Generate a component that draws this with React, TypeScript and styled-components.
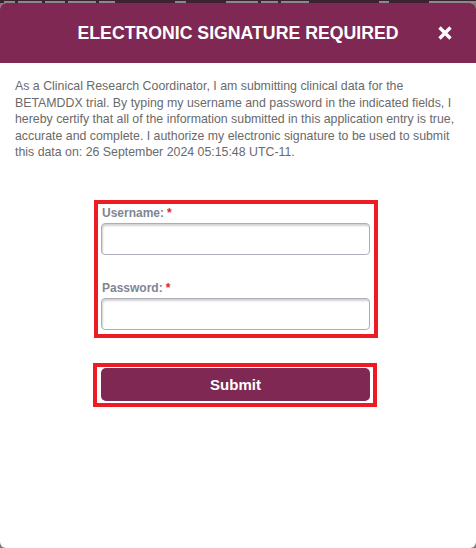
import React from 'react';
import styled, { createGlobalStyle } from 'styled-components';

const GlobalStyle = createGlobalStyle`
    html, body {
        margin: 0;
        padding: 0;
        background: #7b7b7b;
        font-family: 'Liberation Sans', Arial, sans-serif;
    }
`;

const Page = styled.div`
    display: flex;
    flex-direction: column;
    height: 548px;
`;

// strip of the page behind the dialog, only a sliver of it shows
const Backdrop = styled.div`
    height: 3px;
    flex-shrink: 0;
    overflow: hidden;
    background: #3d2232;
    display: flex;
    align-items: flex-end;
    padding-left: 4px;
`;

const Smudge = styled.i<{ $w: number; $gap: number }>`
    display: block;
    width: ${(p) => p.$w}px;
    height: 2px;
    margin-right: ${(p) => p.$gap}px;
    background: #8a8a8a;
`;

const Dialog = styled.div`
    flex: 1;
    display: flex;
    flex-direction: column;
    background: #fff;
    border-radius: 6px;
    overflow: hidden;
`;

const Header = styled.header`
    height: 60px;
    flex-shrink: 0;
    background: #7e2853;
    display: grid;
    grid-template-columns: 1fr auto 1fr;
    align-items: center;
`;

const Title = styled.h2`
    grid-column: 2;
    margin: 0;
    color: #fff;
    font-size: 17.7px;
    font-weight: bold;
`;

const CloseButton = styled.button`
    grid-column: 3;
    justify-self: end;
    margin-right: 23px;
    width: 16px;
    height: 16px;
    padding: 0;
    border: 0;
    background: none;
    display: flex;
    cursor: pointer;
`;

const Body = styled.div`
    padding: 15px 15px 0;
    display: flex;
    flex-direction: column;
`;

const Notice = styled.p`
    margin: 0;
    font-size: 12.35px;
    line-height: 16.5px;
    color: #6a6a6a;
`;

const Highlight = styled.div<{ $left: number; $top: number }>`
    width: 284px;
    box-sizing: border-box;
    border: 4px solid #ed1c24;
    margin-left: ${(p) => p.$left}px;
    margin-top: ${(p) => p.$top}px;
`;

const Fields = styled.div`
    display: flex;
    flex-direction: column;
    padding: 2px 4px 4px 3px;
`;

const Label = styled.label<{ $gap?: number }>`
    font-size: 12px;
    line-height: 14px;
    font-weight: bold;
    color: #7f8694;
    margin-top: ${(p) => p.$gap ?? 0}px;
    margin-bottom: 3px;
    padding-left: 1px;

    & > span {
        color: #e8202a;
        margin-left: 3px;
    }
`;

const Input = styled.input`
    height: 32px;
    box-sizing: border-box;
    border: 1px solid #a9aeb8;
    border-radius: 4px;
    box-shadow: inset 1px 2px 2px rgba(0, 0, 0, 0.18);
    background: #fff;
    font-size: 13px;
    padding: 0 6px;
    outline: none;
`;

const ButtonWrap = styled.div`
    padding: 1px 3px 2px 4px;
    display: flex;
`;

const SubmitButton = styled.button`
    flex: 1;
    height: 33px;
    border: 0;
    border-radius: 5px;
    background: #7e2853;
    color: #fff;
    font-family: 'Liberation Sans', Arial, sans-serif;
    font-size: 15px;
    font-weight: bold;
    cursor: pointer;
`;

const smudges = [
    [14, 3], [30, 3], [26, 3], [36, 3], [20, 60], [14, 40], [40, 3], [22, 3], [36, 70], [12, 40], [60, 0],
];

const App = () => {
    return (
        <Page>
            <GlobalStyle />
            <Backdrop>
                {smudges.map(([w, gap], i) => (
                    <Smudge key={i} $w={w} $gap={gap} />
                ))}
            </Backdrop>

            <Dialog>
                <Header>
                    <Title>ELECTRONIC SIGNATURE REQUIRED</Title>
                    <CloseButton aria-label='Close'>
                        <svg width='16' height='16' viewBox='0 0 16 16'>
                            <path d='M2.5 2.5 L13.5 13.5 M13.5 2.5 L2.5 13.5' stroke='#fff' strokeWidth='3.4' />
                        </svg>
                    </CloseButton>
                </Header>

                <Body>
                    <Notice>
                        As a Clinical Research Coordinator, I am submitting clinical data for the BETAMDDX trial. By
                        typing my username and password in the indicated fields, I hereby certify that all of the
                        information submitted in this application entry is true, accurate and complete. I authorize my
                        electronic signature to be used to submit this data on: 26 September 2024 05:15:48 UTC-11.
                    </Notice>

                    <Highlight $left={79} $top={39}>
                        <Fields>
                            <Label htmlFor='username'>
                                Username:<span>*</span>
                            </Label>
                            <Input id='username' type='text' />
                            <Label htmlFor='password' $gap={26}>
                                Password:<span>*</span>
                            </Label>
                            <Input id='password' type='password' />
                        </Fields>
                    </Highlight>

                    <Highlight $left={78} $top={25}>
                        <ButtonWrap>
                            <SubmitButton>Submit</SubmitButton>
                        </ButtonWrap>
                    </Highlight>
                </Body>
            </Dialog>
        </Page>
    );
};

export default App;
